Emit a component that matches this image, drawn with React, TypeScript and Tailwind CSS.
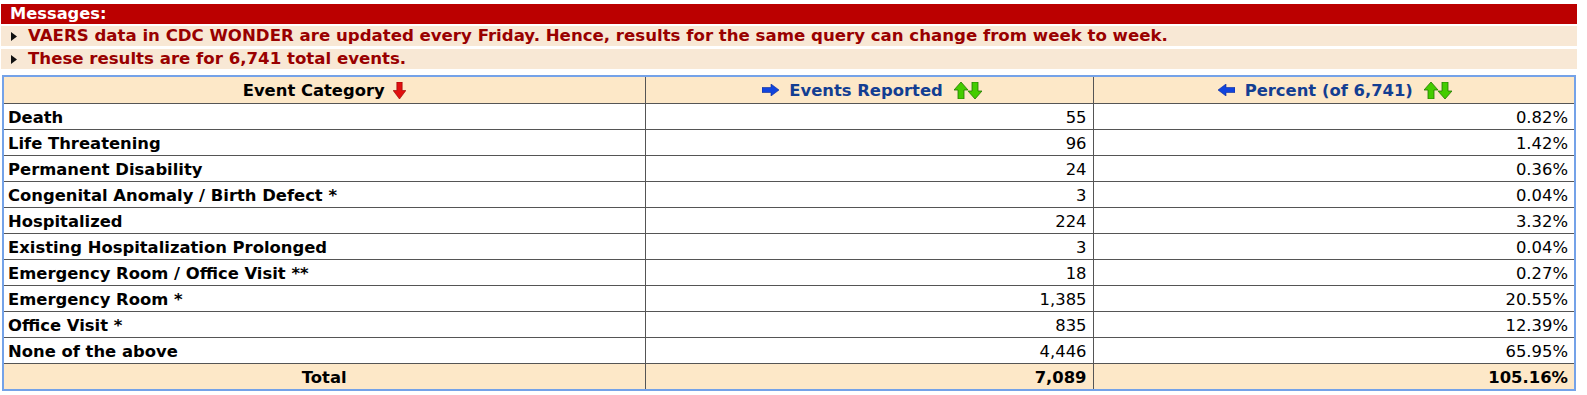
import React from "react";

const rows: [string, string, string][] = [
  ["Death", "55", "0.82%"],
  ["Life Threatening", "96", "1.42%"],
  ["Permanent Disability", "24", "0.36%"],
  ["Congenital Anomaly / Birth Defect *", "3", "0.04%"],
  ["Hospitalized", "224", "3.32%"],
  ["Existing Hospitalization Prolonged", "3", "0.04%"],
  ["Emergency Room / Office Visit **", "18", "0.27%"],
  ["Emergency Room *", "1,385", "20.55%"],
  ["Office Visit *", "835", "12.39%"],
  ["None of the above", "4,446", "65.95%"],
];

function Bullet() {
  return (
    <svg width="6" height="9" viewBox="0 0 6 9" className="inline-block mr-[11px] ml-[10px] shrink-0">
      <polygon points="0,0 6,4.5 0,9" fill="#111" />
    </svg>
  );
}

function RedDown() {
  return (
    <svg width="13" height="17" viewBox="0 0 12 16" className="inline-block ml-[8px] align-[-3px]">
      <polygon points="3.5,0 8.5,0 8.5,8 12,8 6,16 0,8 3.5,8" fill="#e01010" stroke="#900" strokeWidth="0.6" />
    </svg>
  );
}

function BlueRight() {
  return (
    <svg width="17" height="12" viewBox="0 0 17 12" className="inline-block mr-[10px] align-[0px]">
      <polygon points="0,3.5 9,3.5 9,0 17,6 9,12 9,8.5 0,8.5" fill="#1144dd" stroke="#0a2a99" strokeWidth="0.6" />
    </svg>
  );
}

function BlueLeft() {
  return (
    <svg width="17" height="12" viewBox="0 0 17 12" className="inline-block mr-[10px] align-[0px]">
      <polygon points="17,3.5 8,3.5 8,0 0,6 8,12 8,8.5 17,8.5" fill="#1144dd" stroke="#0a2a99" strokeWidth="0.6" />
    </svg>
  );
}

function GreenUpDown() {
  return (
    <svg width="28" height="17" viewBox="0 0 28 17" className="inline-block ml-[11px] align-[-3px]">
      <polygon points="7,0 14,8 10,8 10,17 4,17 4,8 0,8" fill="#44cc00" stroke="#227700" strokeWidth="0.8" />
      <polygon points="18,0 24,0 24,9 28,9 21,17 14,9 18,9" fill="#44cc00" stroke="#227700" strokeWidth="0.8" />
    </svg>
  );
}

export default function App() {
  const font = { fontFamily: '"DejaVu Sans", Verdana, sans-serif' };
  return (
    <div className="bg-white w-[1587px] h-[395px] pt-[4px] pl-[1px]" style={font}>
      <div className="w-[1576px] flex flex-col gap-[2px]">
        <div className="bg-[#bb0000] h-[20px] text-white font-bold text-[16.3px] leading-[20px] pl-[9px]">
          Messages:
        </div>
        <div className="bg-[#f8e8d5] h-[20px] flex items-center text-[#990000] font-bold text-[16.6px] leading-[20px] whitespace-nowrap">
          <Bullet />
          VAERS data in CDC WONDER are updated every Friday. Hence, results for the same query can change from week to week.
        </div>
        <div className="bg-[#f8e8d5] h-[20px] flex items-center text-[#990000] font-bold text-[16.6px] leading-[20px] mt-[1px] whitespace-nowrap">
          <Bullet />
          These results are for 6,741 total events.
        </div>
      </div>
      <div className="mt-[6px] ml-[1px] w-[1574px] border-2 border-[#74a2e8]">
        <table className="w-full border-collapse text-[16.4px] leading-[19px] text-black">
          <colgroup>
            <col className="w-[641px]" />
            <col className="w-[448px]" />
            <col />
          </colgroup>
          <thead>
            <tr className="bg-[#fde8c8] h-[26px]">
              <th className="font-bold text-center border-b border-r border-[#555] px-[4px] pt-[2px]">
                Event Category
                <RedDown />
              </th>
              <th className="font-bold text-center border-b border-r border-[#555] px-[4px] text-[#133e92] pl-[10px] pt-[2px]">
                <BlueRight />
                Events Reported
                <GreenUpDown />
              </th>
              <th className="font-bold text-center border-b border-[#555] px-[4px] text-[#133e92] pl-[6px] pt-[2px]">
                <BlueLeft />
                Percent (of 6,741)
                <GreenUpDown />
              </th>
            </tr>
          </thead>
          <tbody>
            {rows.map(([a, b, c]) => (
              <tr key={a} className="h-[26px]">
                <td className="font-bold text-left border-b border-r border-[#555] pl-[4px] pr-[4px] pt-[3px]">{a}</td>
                <td className="text-right border-b border-r border-[#555] px-[6px] pt-[3px]">{b}</td>
                <td className="text-right border-b border-[#555] px-[6px] pt-[3px]">{c}</td>
              </tr>
            ))}
            <tr className="bg-[#fde8c8] h-[26px]">
              <td className="font-bold text-center border-r border-[#555] px-[4px] pt-[3px]">Total</td>
              <td className="font-bold text-right border-r border-[#555] px-[6px] pt-[3px]">7,089</td>
              <td className="font-bold text-right px-[6px] pt-[3px]">105.16%</td>
            </tr>
          </tbody>
        </table>
      </div>
    </div>
  );
}
